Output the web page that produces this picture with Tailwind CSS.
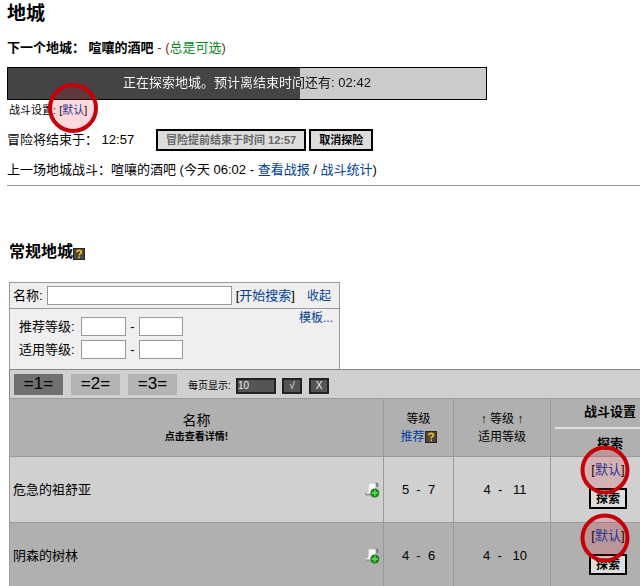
<!DOCTYPE html>
<html lang="zh-CN">
<head>
<meta charset="utf-8">
<title>地城</title>
<script src="https://cdn.jsdelivr.net/npm/@tailwindcss/browser@4"></script>
</head>
<body class="overflow-x-hidden bg-white font-['Liberation_Sans','Noto_Sans_CJK_SC',sans-serif] text-[13px] leading-5 text-black">
<svg class="hidden">
  <symbol id="help" viewBox="0 0 12 12">
    <rect width="12" height="12" fill="#2c2420"/>
    <rect x="1" y="1" width="10" height="10" fill="#51443c"/>
    <path d="M3.8 4.2C3.8 1.7 8.4 1.7 8.4 4.2C8.4 5.6 6.2 5.8 6.2 7.4M6.2 8.5V10.3" fill="none" stroke="#f2bd28" stroke-width="1.6"/>
  </symbol>
  <symbol id="scroll" viewBox="0 0 16 16">
    <path d="M4.500 1L12 1L11.500 13L2 13C0 12.500 0 10.500 2 10L4 10Z" fill="#f8f8f8" stroke="#b4b4b4" stroke-width=".6"/>
    <path d="M11 1C14 .3 15.500 2.500 14 5L12 5C13 3.500 12.500 2 11 1Z" fill="#777"/>
    <path d="M1.500 10.500C0 12.500 2 14 5 13.500L7 13.500L6.500 11.500L3 11.500Z" fill="#999"/>
    <circle cx="10.800" cy="11" r="4.500" fill="#16861c"/>
    <path d="M10.800 8V14M7.800 11H13.800" stroke="#58d458" stroke-width="1.800"/>
  </symbol>
</svg>

<main>
  <section class="pl-[7px]">
    <h1 class="pt-0.5 text-[19px] leading-6 font-bold">地城</h1>
    <p class="mt-3"><b>下一个地城： 喧嚷的酒吧</b> <span class="text-[#8b2030]">- (<span class="text-[#068a1a]">总是可选</span>)</span></p>
    <div class="mt-[9px] h-[33px] w-[76%] max-w-[480px] border border-black bg-[linear-gradient(to_right,#444_61%,#cbcbcb_61%)]">
      <p class="bg-[linear-gradient(to_right,#fff_61%,#111_61%)] bg-clip-text text-center leading-[30px] text-transparent">正在探索地城。预计离结束时间还有: 02:42</p>
    </div>
    <p class="pl-0.5 text-[11px]">战斗设置: <span class="relative inline-block">[<a href="#" class="text-[#00409c]">默认</a>]<span class="pointer-events-none absolute top-[40%] left-1/2 size-[50px] -translate-1/2 rounded-full border-4 border-[#c60008] bg-[#f00018]/15"></span></span></p>
    <div class="mt-[9px] flex h-[22px] items-center gap-[3px]">
      <span class="w-[146px]">冒险将结束于： 12:57</span>
      <button disabled class="h-[22px] border-2 border-black bg-[#ddd] px-2 text-[11px] leading-4 font-bold whitespace-nowrap text-[#666]">冒险提前结束于时间 12:57</button>
      <button class="h-[22px] border-2 border-black bg-[#ddd] px-2 text-[11px] leading-4 font-bold">取消探险</button>
    </div>
    <p class="mt-[9px]">上一场地城战斗：喧嚷的酒吧 (今天 06:02 - <a href="#" class="text-[#00409c]">查看战报</a> / <a href="#" class="text-[#00409c]">战斗统计</a>)</p>
    <hr class="mt-[5px] border-[#999]">
  </section>

  <section class="pl-[9px]">
    <h2 class="mt-[54px] flex items-center text-[16px] leading-6 font-bold">常规地城<svg class="mt-1 size-3"><use href="#help"/></svg></h2>
    <form class="mt-[18px] w-[331px] border border-b-0 border-[#999] bg-[#efefef]">
      <div class="flex h-[26px] items-center border-b border-[#999] pl-[3px]">
        <label for="name" class="mr-1">名称:</label>
        <input id="name" class="h-[19px] w-[185px] border border-[#999] bg-white px-1">
        <span class="ml-1">[<a href="#" class="text-[#00409c]">开始搜索</a>]</span>
        <a href="#" class="mr-2 ml-auto text-[12px] text-[#00409c]">收起</a>
      </div>
      <div class="flex h-[60px] justify-between pr-1.5 pl-[9px]">
        <div class="flex flex-col gap-1 pt-2">
          <div class="flex h-[19px] items-center"><label for="rmin" class="w-[62px]">推荐等级:</label><input id="rmin" class="h-[19px] w-[45px] border border-[#999] bg-white"><span class="w-[13px] text-center">-</span><input aria-label="推荐等级" class="h-[19px] w-11 border border-[#999] bg-white"></div>
          <div class="flex h-[19px] items-center"><label for="umin" class="w-[62px]">适用等级:</label><input id="umin" class="h-[19px] w-[45px] border border-[#999] bg-white"><span class="w-[13px] text-center">-</span><input aria-label="适用等级" class="h-[19px] w-11 border border-[#999] bg-white"></div>
        </div>
        <a href="#" class="text-[12px] leading-[18px] text-[#00409c]">模板...</a>
      </div>
    </form>
    <div class="flex h-[29px] items-center border-t border-l border-[#888] bg-[#d0d0d0] pl-1">
      <nav class="flex gap-2 text-[17px] leading-5">
        <button class="h-[21px] w-[49px] bg-[#707070]">=1=</button>
        <button class="h-[21px] w-[49px] bg-[#b4b4b4]">=2=</button>
        <button class="h-[21px] w-[49px] bg-[#b4b4b4]">=3=</button>
      </nav>
      <div class="mt-[3px] ml-[11px] flex items-center text-[10px] leading-4">
        <label for="size" class="w-12">每页显示:</label>
        <input id="size" value="10" class="h-4 w-10 border-2 border-[#222] bg-[#555] text-[#eee]">
        <button class="ml-1.5 h-4 w-5 border-2 border-[#222] bg-[#555] leading-3 text-[#eee]">√</button>
        <button class="ml-[7px] h-4 w-5 border-2 border-[#222] bg-[#555] leading-3 text-[#eee]">X</button>
      </div>
    </div>
    <table class="w-[calc(100%+26px)] table-fixed border-collapse bg-[#b0b0b0] text-center">
      <colgroup><col><col class="w-[70px]"><col class="w-[97px]"><col class="w-[115px]"></colgroup>
      <thead>
        <tr class="h-[58px]">
          <th class="border border-[#999] font-normal"><div class="text-[14px] leading-[18px]">名称</div><div class="text-[10px] leading-4 font-bold">点击查看详情!</div></th>
          <th class="border border-[#999] text-[12px] leading-[18px] font-normal">等级<div class="flex items-center justify-center"><a href="#" class="text-[#00409c]">推荐</a><svg class="size-3"><use href="#help"/></svg></div></th>
          <th class="border border-[#999] text-[12px] leading-[18px] font-normal">↑ 等级 ↑<br>适用等级</th>
          <th class="border border-[#999] pl-1 text-[13px] leading-5">战斗设置<hr class="my-[5px] border-t-2 border-[#e0e0e0]">探索</th>
        </tr>
      </thead>
      <tbody>
        <tr class="h-[66px] bg-[#d0d0d0]">
          <td class="border border-[#999] px-[3px]"><div class="flex items-center justify-between">危急的祖舒亚<svg class="size-4"><use href="#scroll"/></svg></div></td>
          <td class="border border-[#999] whitespace-pre">5  -  7</td>
          <td class="border border-[#999] pl-1.5 whitespace-pre">4  -   11</td>
          <td class="border border-[#999] pt-[3px] align-top"><span class="relative inline-block">[<a href="#" class="text-[#00409c]">默认</a>]<span class="pointer-events-none absolute top-1/2 left-[40%] size-[49px] -translate-1/2 rounded-full border-4 border-[#c60008] bg-[#f00018]/15"></span></span><button class="mx-auto mt-2 block h-[21px] w-[38px] border-2 border-black bg-[#ddd] text-[12px] leading-4 font-bold">探索</button></td>
        </tr>
        <tr class="h-[66px]">
          <td class="border border-[#999] px-[3px]"><div class="flex items-center justify-between">阴森的树林<svg class="size-4"><use href="#scroll"/></svg></div></td>
          <td class="border border-[#999] whitespace-pre">4  -  6</td>
          <td class="border border-[#999] pl-1.5 whitespace-pre">4  -   10</td>
          <td class="border border-[#999] pt-[3px] align-top"><span class="relative inline-block">[<a href="#" class="text-[#00409c]">默认</a>]<span class="pointer-events-none absolute top-[60%] left-[40%] size-[49px] -translate-1/2 rounded-full border-4 border-[#c60008] bg-[#f00018]/15"></span></span><button class="mx-auto mt-2 block h-[21px] w-[38px] border-2 border-black bg-[#ddd] text-[12px] leading-4 font-bold">探索</button></td>
        </tr>
      </tbody>
    </table>
  </section>
</main>
</body>
</html>
